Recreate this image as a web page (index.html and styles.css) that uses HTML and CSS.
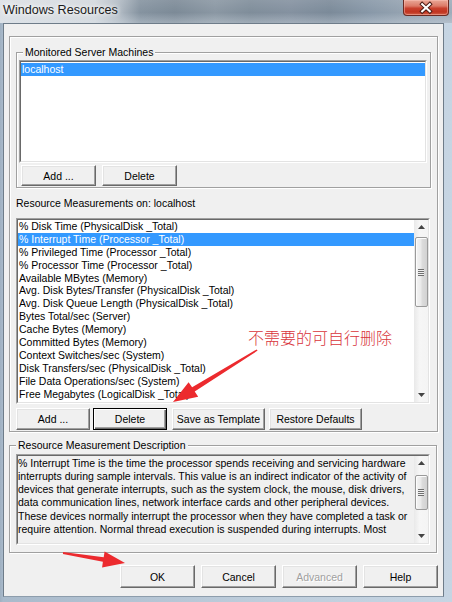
FILE: index.html
```html
<!DOCTYPE html>
<html>
<head>
<meta charset="utf-8">
<title>Windows Resources</title>
<link rel="stylesheet" href="styles.css">
</head>
<body>
<div class="window">
  <div class="titlebar">
    <span class="title">Windows Resources</span>
    <div class="close">
      <svg width="46" height="16" viewBox="0 0 46 16">
        <path d="M19 4 L27 11.5 M27 4 L19 11.5" stroke="#4a1a14" stroke-width="4.2" stroke-linecap="square" fill="none"/>
        <path d="M19 4 L27 11.5 M27 4 L19 11.5" stroke="#ffffff" stroke-width="2.2" stroke-linecap="square" fill="none"/>
      </svg>
    </div>
  </div>
  <div class="frame">
    <div class="client">
      <div class="panel">
        <fieldset class="group servers">
          <legend>Monitored Server Machines</legend>
          <div class="listbox servers-list">
            <div class="lb-in">
              <div class="rows">
                <div class="row sel">localhost</div>
              </div>
            </div>
          </div>
          <div class="btnrow servers-btns">
            <div class="btn b-srv">Add ...</div>
            <div class="btn b-srv">Delete</div>
          </div>
        </fieldset>

        <div class="caption">Resource Measurements on: localhost</div>

        <div class="listbox res-list">
          <div class="lb-in">
            <div class="rows">
              <div class="row">% Disk Time (PhysicalDisk _Total)</div>
              <div class="row sel">% Interrupt Time (Processor _Total)</div>
              <div class="row">% Privileged Time (Processor _Total)</div>
              <div class="row">% Processor Time (Processor _Total)</div>
              <div class="row">Available MBytes (Memory)</div>
              <div class="row">Avg. Disk Bytes/Transfer (PhysicalDisk _Total)</div>
              <div class="row">Avg. Disk Queue Length (PhysicalDisk _Total)</div>
              <div class="row">Bytes Total/sec (Server)</div>
              <div class="row">Cache Bytes (Memory)</div>
              <div class="row">Committed Bytes (Memory)</div>
              <div class="row">Context Switches/sec (System)</div>
              <div class="row">Disk Transfers/sec (PhysicalDisk _Total)</div>
              <div class="row">File Data Operations/sec (System)</div>
              <div class="row">Free Megabytes (LogicalDisk _Total)</div>
              <div class="row">Interrupts/sec (Processor _Total)</div>
            </div>
            <div class="vscroll">
              <div class="sarrow"><svg width="7" height="4" viewBox="0 0 7 4"><path d="M0 4 L3.5 0 L7 4 Z" fill="#444"/></svg></div>
              <div class="track">
                <div class="thumb res-thumb"><div class="grip"></div></div>
              </div>
              <div class="sarrow"><svg width="7" height="4" viewBox="0 0 7 4"><path d="M0 0 L7 0 L3.5 4 Z" fill="#444"/></svg></div>
            </div>
          </div>
        </div>

        <div class="btnrow res-btns">
          <div class="btn b-add">Add ...</div>
          <div class="btn b-del default">Delete</div>
          <div class="btn b-wide b-save">Save as Template</div>
          <div class="btn b-wide b-rest">Restore Defaults</div>
        </div>
      </div>

      <fieldset class="group desc">
        <legend>Resource Measurement Description</legend>
        <div class="listbox desc-box">
          <div class="lb-in grey">
            <div class="desc-text">
              <div class="line">% Interrupt Time is the time the processor spends receiving and servicing hardware</div>
              <div class="line">interrupts during sample intervals. This value is an indirect indicator of the activity of</div>
              <div class="line">devices that generate interrupts, such as the system clock, the mouse, disk drivers,</div>
              <div class="line">data communication lines, network interface cards and other peripheral devices.</div>
              <div class="line">These devices normally interrupt the processor when they have completed a task or</div>
              <div class="line">require attention. Normal thread execution is suspended during interrupts. Most</div>
            </div>
            <div class="vscroll">
              <div class="sarrow"><svg width="7" height="4" viewBox="0 0 7 4"><path d="M0 4 L3.5 0 L7 4 Z" fill="#444"/></svg></div>
              <div class="track">
                <div class="thumb desc-thumb"><div class="grip"></div></div>
              </div>
              <div class="sarrow"><svg width="7" height="4" viewBox="0 0 7 4"><path d="M0 0 L7 0 L3.5 4 Z" fill="#444"/></svg></div>
            </div>
          </div>
        </div>
      </fieldset>

      <div class="dlgbtns">
        <div class="btn b-dlg">OK</div>
        <div class="btn b-dlg">Cancel</div>
        <div class="btn b-dlg disabled">Advanced</div>
        <div class="btn b-dlg">Help</div>
      </div>
    </div>
  </div>

  <svg class="annot" width="452" height="602" viewBox="0 0 452 602">
    <polygon points="257.6,350.6 194.7,391.5 198.2,396.8 173,402 188.6,382.2 192.1,387.3 256.6,349.4" fill="#ec2a2e"/>
    <polygon points="62.9,553.9 102.9,561.8 102.1,567.4 125,563 104.6,551.6 103.7,557.2 63.1,552.1" fill="#ec2a2e"/>
  </svg>
  <div class="note">不需要的可自行删除</div>
</div>
</body>
</html>
```

FILE: styles.css
```css
* { box-sizing: border-box; }

html, body {
  margin: 0;
  padding: 0;
}

body {
  width: 452px;
  height: 602px;
  overflow: hidden;
  font-family: "Liberation Sans", Arial, sans-serif;
  font-size: 10.5px;
  color: #000;
  background: #b8c7d5;
}

.window {
  position: relative;
  width: 452px;
  height: 602px;
  display: flex;
  flex-direction: column;
  background: linear-gradient(to right, #9fb0c1 0px, #a9bacb 3px, #bfcedc 60%, #c6d5e3 100%);
}

/* ---------- title bar ---------- */
.titlebar {
  height: 23px;
  display: flex;
  justify-content: space-between;
  align-items: flex-start;
  background:
    linear-gradient(to bottom, rgba(255,255,255,0.10) 0%, rgba(255,255,255,0) 55%, rgba(220,228,236,0.35) 100%),
    linear-gradient(to right, #dde1e5 0px, #d3d8dd 95px, #b3bcc5 118px, #8593a0 140px, #7c8a97 175px, #8a97a3 215px, #7f8d9a 250px, #8491a0 290px, #7b8a99 330px, #8898a8 370px, #95a3b1 405px, #9eacba 452px);
}

.title {
  padding-left: 3px;
  line-height: 20px;
  font-size: 12.6px;
  color: #1b1b1b;
  text-shadow: 0 0 4px #fff, 0 0 7px #fff;
  white-space: nowrap;
}

.close {
  width: 46px;
  height: 16px;
  margin-right: 3px;
  border: 1px solid #6b2a22;
  border-top: none;
  border-radius: 0 0 4px 4px;
  background: linear-gradient(to bottom, #e9a797 0%, #dc7a68 40%, #c8402d 55%, #c03420 80%, #d2624a 100%);
  box-shadow: inset 0 0 0 1px rgba(255,200,190,0.45);
  display: flex;
}

/* ---------- frame / client ---------- */
.frame {
  flex: 1;
  display: flex;
  padding: 0 8px 5px 3px;
}

.client {
  flex: 1;
  background: #f0f0f0;
  border: 1px solid #6e7c89;
  border-bottom-color: #8d9dac;
  display: flex;
  flex-direction: column;
  padding: 12px 5px 0 5px;
}

/* ---------- panel ---------- */
.panel {
  height: 396px;
  border: 1px solid #a0a0a0;
  box-shadow: inset 1px 1px 0 #fff, 1px 1px 0 #fff;
  display: flex;
  flex-direction: column;
  align-items: flex-start;
  padding-left: 6px;
}

/* ---------- group boxes ---------- */
.group {
  margin: 0;
  padding: 0;
  min-width: 0;
  border: 1px solid #a0a0a0;
  box-shadow: inset 1px 1px 0 #fff, 1px 1px 0 #fff;
}

.group legend {
  line-height: 12px;
  padding: 0 2px;
  margin-left: 5px;
  background: #f0f0f0;
  white-space: nowrap;
}

.servers {
  width: 415px;
  margin-top: 9px;
  padding: 0 0 1px 1px;
}

.desc {
  width: 428px;
  margin-top: 7px;
  padding: 0 0 7px 6px;
}

.desc legend {
  margin-left: 0;
}

/* ---------- list boxes ---------- */
.listbox {
  border: 1px solid;
  border-color: #a0a0a0 #ffffff #ffffff #a0a0a0;
}

.lb-in {
  height: 100%;
  border: 1px solid;
  border-color: #696969 #e3e3e3 #e3e3e3 #696969;
  background: #fff;
  display: flex;
  overflow: hidden;
}

.lb-in.grey {
  background: #f0f0f0;
}

.servers-list {
  width: 408px;
  height: 103px;
  margin-top: 2px;
  margin-left: 1px;
}

.servers-list .rows {
  padding-top: 1px;
}

.res-list {
  width: 414px;
  height: 186px;
  margin-top: 9px;
}

.rows {
  flex: 1;
  min-width: 0;
  overflow: hidden;
}

.row {
  height: 12.9px;
  line-height: 13px;
  padding-left: 1px;
  white-space: nowrap;
}

.row.sel {
  background: #3399ff;
  color: #fff;
}

.caption {
  margin-top: 9px;
  line-height: 12px;
  white-space: nowrap;
}

/* ---------- description ---------- */
.desc-box {
  width: 414px;
  height: 91px;
  margin-top: 3px;
}

.desc-text {
  flex: 1;
  min-width: 0;
  overflow: hidden;
}

.desc-text .line {
  line-height: 13.3px;
  white-space: nowrap;
  padding-top: 0;
}

.desc-text .line:first-child {
  margin-top: 0.5px;
}

/* ---------- scroll bars ---------- */
.vscroll {
  width: 14px;
  flex: none;
  display: flex;
  flex-direction: column;
  background: linear-gradient(to right, #e9e9e9, #f6f6f6 40%, #f4f4f4);
}

.sarrow {
  height: 14px;
  flex: none;
  display: flex;
  align-items: center;
  justify-content: center;
}

.track {
  flex: 1;
  display: flex;
  flex-direction: column;
  align-items: center;
}

.thumb {
  width: 13px;
  border: 1px solid #9a9a9a;
  border-radius: 2px;
  background: linear-gradient(to right, #f4f4f4 0%, #eaeaea 45%, #dcdcdc 55%, #d2d2d2 100%);
  box-shadow: inset 1px 1px 0 #fcfcfc;
  display: flex;
  align-items: center;
  justify-content: center;
}

.res-thumb {
  margin-top: 3px;
  height: 70px;
}

.desc-thumb {
  margin-top: 5px;
  height: 35px;
}

.grip {
  width: 6px;
  height: 7px;
  background: repeating-linear-gradient(to bottom, #6f6f6f 0px, #6f6f6f 1px, #f0f0f0 1px, #f0f0f0 2px);
}

/* ---------- buttons ---------- */
.btnrow {
  display: flex;
}

.btn {
  display: flex;
  align-items: center;
  justify-content: center;
  background: #f0f0f0;
  border: 1px solid;
  border-color: #ffffff #696969 #696969 #ffffff;
  box-shadow: inset -1px -1px 0 #a0a0a0, inset 1px 1px 0 #e3e3e3;
  white-space: nowrap;
  color: #000;
}

.servers-btns {
  margin-top: 2px;
  margin-left: 3px;
  gap: 6px;
}

.b-srv {
  width: 75px;
  height: 21px;
}

.res-btns {
  margin-top: 4px;
}

.res-btns .btn {
  height: 22px;
}

.b-add { width: 74px; }
.b-del { width: 74px; margin-left: 3px; }
.b-save { margin-left: 5px; }
.b-rest { margin-left: 4px; }
.b-wide { width: 93px; }

.btn.default {
  border: 1px solid #000;
  box-shadow: inset 1px 1px 0 #fff, inset -1px -1px 0 #696969, inset -2px -2px 0 #a0a0a0;
}

.dlgbtns {
  margin-top: 12px;
  display: flex;
  justify-content: flex-end;
  gap: 6px;
}

.b-dlg {
  width: 75px;
  height: 23px;
}

.btn.disabled {
  color: #a0a0a0;
  text-shadow: 1px 1px 0 #fff;
}

/* ---------- annotations (overlay) ---------- */
.annot {
  position: absolute;
  left: 0;
  top: 0;
  pointer-events: none;
}

.note {
  position: absolute;
  left: 248px;
  top: 328px;
  font-family: "Noto Sans CJK SC", "Noto Sans CJK TC", sans-serif;
  font-size: 16px;
  line-height: 18px;
  font-weight: 300;
  color: #d8343a;
  text-shadow: 0 0 2px #fff;
  white-space: nowrap;
}
```
